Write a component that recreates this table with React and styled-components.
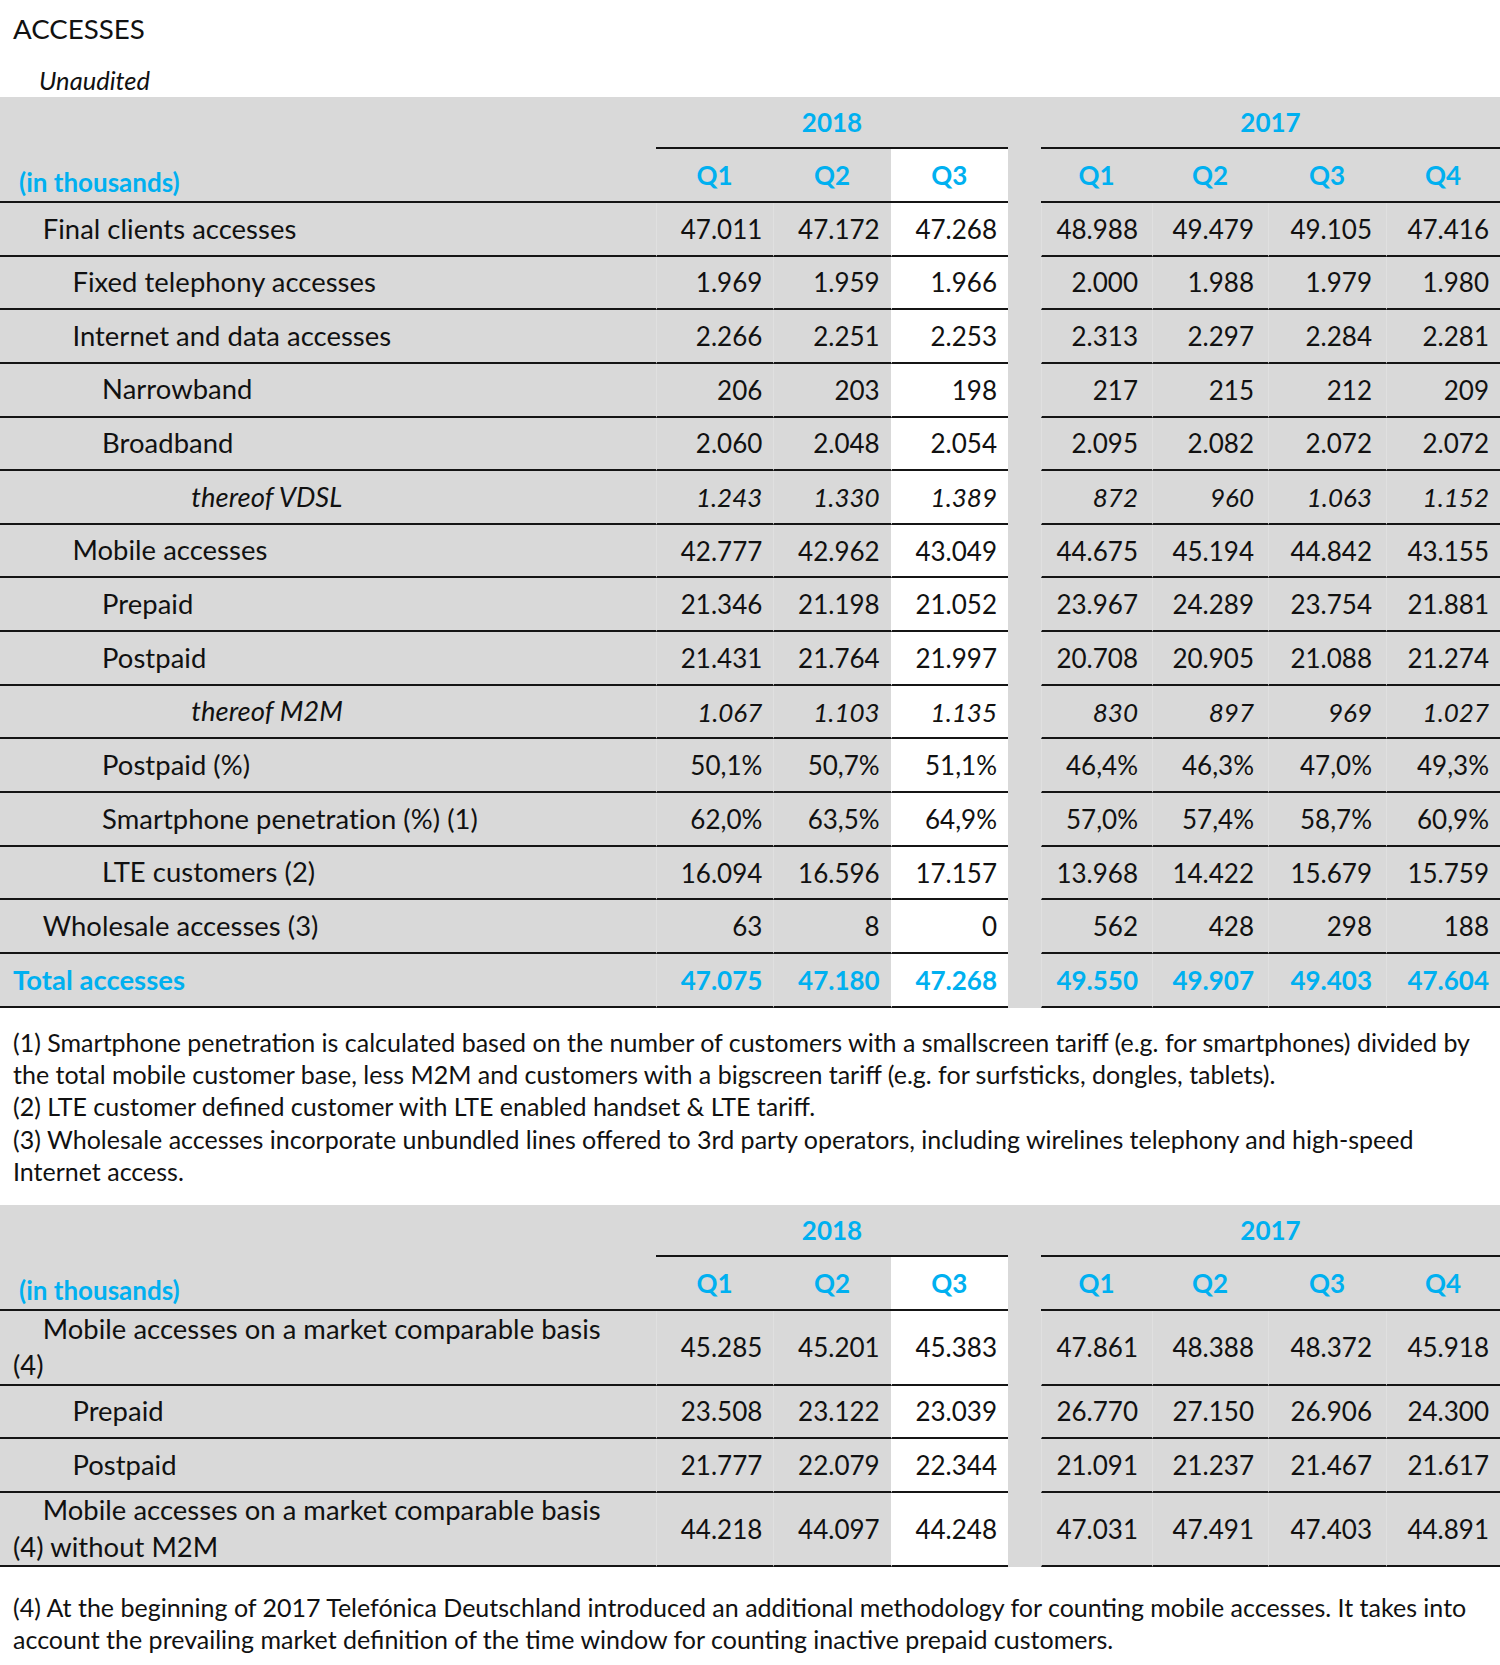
import React from 'react';
import styled, { createGlobalStyle } from 'styled-components';

const GlobalStyle = createGlobalStyle`
  html, body {
    margin: 0;
    padding: 0;
    background: #fff;
  }
  body {
    font-family: Lato, "Open Sans", sans-serif;
    color: #111;
  }
`;

const COLS = '656px repeat(3, 117.33px) 33px 111px 116px 118px 114px';
const BLUE = '#00b0f0';
const GRAY = '#d9d9d9';

const accesses = [
  { label: 'Final clients accesses', level: 1, v: ['47.011', '47.172', '47.268', '48.988', '49.479', '49.105', '47.416'] },
  { label: 'Fixed telephony accesses', level: 2, v: ['1.969', '1.959', '1.966', '2.000', '1.988', '1.979', '1.980'] },
  { label: 'Internet and data accesses', level: 2, v: ['2.266', '2.251', '2.253', '2.313', '2.297', '2.284', '2.281'] },
  { label: 'Narrowband', level: 3, v: ['206', '203', '198', '217', '215', '212', '209'] },
  { label: 'Broadband', level: 3, v: ['2.060', '2.048', '2.054', '2.095', '2.082', '2.072', '2.072'] },
  { label: 'thereof VDSL', level: 6, italic: true, v: ['1.243', '1.330', '1.389', '872', '960', '1.063', '1.152'] },
  { label: 'Mobile accesses', level: 2, v: ['42.777', '42.962', '43.049', '44.675', '45.194', '44.842', '43.155'] },
  { label: 'Prepaid', level: 3, v: ['21.346', '21.198', '21.052', '23.967', '24.289', '23.754', '21.881'] },
  { label: 'Postpaid', level: 3, v: ['21.431', '21.764', '21.997', '20.708', '20.905', '21.088', '21.274'] },
  { label: 'thereof M2M', level: 6, italic: true, v: ['1.067', '1.103', '1.135', '830', '897', '969', '1.027'] },
  { label: 'Postpaid (%)', level: 3, v: ['50,1%', '50,7%', '51,1%', '46,4%', '46,3%', '47,0%', '49,3%'] },
  { label: 'Smartphone penetration (%) (1)', level: 3, v: ['62,0%', '63,5%', '64,9%', '57,0%', '57,4%', '58,7%', '60,9%'] },
  { label: 'LTE customers (2)', level: 3, v: ['16.094', '16.596', '17.157', '13.968', '14.422', '15.679', '15.759'] },
  { label: 'Wholesale accesses (3)', level: 1, v: ['63', '8', '0', '562', '428', '298', '188'] },
  { label: 'Total accesses', level: 0, total: true, v: ['47.075', '47.180', '47.268', '49.550', '49.907', '49.403', '47.604'] },
];

const comparable = [
  { label: 'Mobile accesses on a market comparable basis (4)', level: 1, h: 75, v: ['45.285', '45.201', '45.383', '47.861', '48.388', '48.372', '45.918'] },
  { label: 'Prepaid', level: 2, v: ['23.508', '23.122', '23.039', '26.770', '27.150', '26.906', '24.300'] },
  { label: 'Postpaid', level: 2, v: ['21.777', '22.079', '22.344', '21.091', '21.237', '21.467', '21.617'] },
  { label: 'Mobile accesses on a market comparable basis (4) without M2M', level: 1, h: 74, v: ['44.218', '44.097', '44.248', '47.031', '47.491', '47.403', '44.891'] },
];

// right padding of each number column, so the figures line up as in the sheet
const PAD = [11, 11, 11, 14, 14, 14, 11];

function HeaderRows() {
  return (
    <>
      <Row $h={52}>
        <Cell $plain />
        <YearCell $span={3}>2018</YearCell>
        <Gap />
        <YearCell $span={4}>2017</YearCell>
      </Row>
      <Row $h={54}>
        <UnitCell>(in thousands)</UnitCell>
        <QCell>Q1</QCell>
        <QCell>Q2</QCell>
        <QCell $white>Q3</QCell>
        <Gap />
        <QCell>Q1</QCell>
        <QCell>Q2</QCell>
        <QCell>Q3</QCell>
        <QCell>Q4</QCell>
      </Row>
    </>
  );
}

function DataRow({ row }) {
  const nums = row.v.map((n, i) => (
    <NumCell key={i} $white={i === 2} $italic={row.italic} $total={row.total} $pad={PAD[i]}>
      {n}
    </NumCell>
  ));
  return (
    <Row $h={row.h || 53.65}>
      <LabelCell $level={row.level} $italic={row.italic} $total={row.total}>
        <span>{row.label}</span>
      </LabelCell>
      {nums.slice(0, 3)}
      <Gap />
      {nums.slice(3)}
    </Row>
  );
}

export default function App() {
  return (
    <Page>
      <GlobalStyle />
      <Title>ACCESSES</Title>
      <Unaudited>Unaudited</Unaudited>
      <Table>
        <HeaderRows />
        {accesses.map((r) => (
          <DataRow key={r.label} row={r} />
        ))}
      </Table>
      <Notes>
        <p>
          (1) Smartphone penetration is calculated based on the number of customers with a smallscreen tariff (e.g. for smartphones) divided by
          the total mobile customer base, less M2M and customers with a bigscreen tariff (e.g. for surfsticks, dongles, tablets).
        </p>
        <p>(2) LTE customer defined customer with LTE enabled handset &amp; LTE tariff.</p>
        <p>
          (3) Wholesale accesses incorporate unbundled lines offered to 3rd party operators, including wirelines telephony and high-speed
          Internet access.
        </p>
      </Notes>
      <Table>
        <HeaderRows />
        {comparable.map((r) => (
          <DataRow key={r.label} row={r} />
        ))}
      </Table>
      <Notes $last>
        <p>
          (4) At the beginning of 2017 Telefónica Deutschland introduced an additional methodology for counting mobile accesses. It takes into
          account the prevailing market definition of the time window for counting inactive prepaid customers.
        </p>
      </Notes>
    </Page>
  );
}

const Page = styled.div`
  width: 1500px;
  padding-bottom: 8px;
`;

const Title = styled.h1`
  margin: 9px 0 0 13px;
  font-size: 27.7px;
  font-weight: 400;
  line-height: 40px;
`;

const Unaudited = styled.div`
  margin: 16px 0 2px 39px;
  font-size: 25.5px;
  font-style: italic;
  line-height: 30px;
`;

const Table = styled.div`
  background: ${GRAY};
  font-size: 26px;
`;

const Row = styled.div`
  display: grid;
  grid-template-columns: ${COLS};
  grid-template-rows: ${(p) => p.$h}px;
  height: ${(p) => p.$h}px;
`;

const Cell = styled.div`
  display: flex;
  align-items: center;
  box-sizing: border-box;
  min-height: 0;
  border-bottom: ${(p) => (p.$plain ? 'none' : '2px solid #151515')};
  background: ${(p) => (p.$white ? '#fff' : 'transparent')};
`;

const Gap = styled.div``;

const YearCell = styled(Cell)`
  grid-column: span ${(p) => p.$span};
  justify-content: center;
  color: ${BLUE};
  font-weight: 700;
`;

const QCell = styled(Cell)`
  justify-content: center;
  color: ${BLUE};
  font-weight: 700;
`;

const UnitCell = styled(Cell)`
  align-items: flex-end;
  padding: 0 0 3px 19px;
  color: ${BLUE};
  font-weight: 700;
`;

const LabelCell = styled(Cell)`
  padding: 0 50px 0 13px;
  font-size: 27.4px;
  letter-spacing: 0.05px;
  line-height: 36.5px;
  font-style: ${(p) => (p.$italic ? 'italic' : 'normal')};
  font-weight: ${(p) => (p.$total ? 700 : 400)};
  color: ${(p) => (p.$total ? BLUE : 'inherit')};

  span {
    display: block;
    text-indent: ${(p) => p.$level * 29.7}px;
  }
`;

const NumCell = styled(Cell)`
  justify-content: flex-end;
  padding-right: ${(p) => p.$pad}px;
  border-left: 1px solid rgba(255, 255, 255, 0.18);
  font-style: ${(p) => (p.$italic ? 'italic' : 'normal')};
  font-weight: ${(p) => (p.$total ? 700 : 400)};
  color: ${(p) => (p.$total ? BLUE : 'inherit')};
`;

const Notes = styled.div`
  padding: ${(p) => (p.$last ? '24px 13px 0' : '18px 13px 17px')};
  font-size: 25px;
  line-height: 32.4px;

  p {
    margin: 0;
  }
`;
